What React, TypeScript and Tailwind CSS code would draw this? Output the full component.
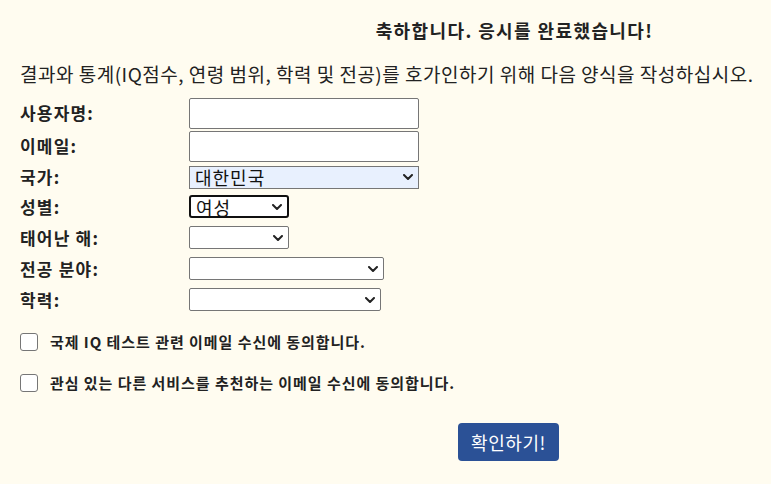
import { useState } from 'react';

const font = { fontFamily: '"Noto Sans CJK KR", "Noto Sans", sans-serif' };

function Chevron() {
  return (
    <svg viewBox="0 0 10 6" className="h-[6px] w-[10px] text-[#222]" fill="none" stroke="currentColor" strokeWidth="2" strokeLinecap="round" strokeLinejoin="round">
      <path d="M1 1l4 4 4-4" />
    </svg>
  );
}

function FakeSelect({ width, value, tone = 'plain' }: { width: string; value?: string; tone?: 'plain' | 'autofill' | 'focus' }) {
  const look =
    tone === 'autofill'
      ? 'bg-[#e8f0fe] border border-[#767676]'
      : tone === 'focus'
      ? 'bg-white border-2 border-[#101010] rounded-[3px]'
      : 'bg-white border border-[#767676] rounded-[2px]';
  return (
    <div className={`${width} h-[23px] flex items-center justify-between pl-[5px] pr-[5px] ${look}`}>
      <span className="text-[18px] leading-none tracking-[1px] text-[#111]">{value}</span>
      <Chevron />
    </div>
  );
}

export default function App() {
  const [a, setA] = useState(false);
  const [b, setB] = useState(false);

  const rows: { label: string; h: string; field: React.ReactNode }[] = [
    { label: '사용자명:', h: 'h-[32px]', field: <input className="w-[230px] h-[31px] bg-white border border-[#767676] rounded-[2px]" /> },
    { label: '이메일:', h: 'h-[34px]', field: <input className="w-[230px] h-[31px] bg-white border border-[#767676] rounded-[2px]" /> },
    { label: '국가:', h: 'h-[28px]', field: <FakeSelect width="w-[230px]" value="대한민국" tone="autofill" /> },
    { label: '성별:', h: 'h-[31px]', field: <FakeSelect width="w-[100px]" value="여성" tone="focus" /> },
    { label: '태어난 해:', h: 'h-[31px]', field: <FakeSelect width="w-[100px]" /> },
    { label: '전공 분야:', h: 'h-[31px]', field: <FakeSelect width="w-[195px]" /> },
    { label: '학력:', h: 'h-[31px]', field: <FakeSelect width="w-[192px]" /> },
  ];

  return (
    <div className="min-h-[484px] w-[771px] bg-[#fffcf0] text-[#222]" style={font}>
      <div className="pt-[18px] pl-[258px] text-center text-[18px] font-bold leading-[24px] tracking-[1.4px]">축하합니다. 응시를 완료했습니다!</div>
      <p className="mt-[20px] pl-[20px] text-[19px] leading-[24px] tracking-[0.5px] whitespace-nowrap">
        결과와 통계(IQ점수, 연령 범위, 학력 및 전공)를 호가인하기 위해 다음 양식을 작성하십시오.
      </p>
      <div className="mt-[11px] pl-[20px]">
        {rows.map(r => (
          <div key={r.label} className={`flex items-center ${r.h}`}>
            <div className="w-[169px] text-[17px] font-bold tracking-[1.2px]">{r.label}</div>
            {r.field}
          </div>
        ))}
      </div>
      <div className="mt-[17px] pl-[20px] flex flex-col gap-[21px]">
        <label className="flex items-center gap-[12px] text-[15px] font-bold tracking-[0.95px] leading-[20px]">
          <span
            onClick={() => setA(v => !v)}
            className={`w-[18px] h-[18px] rounded-[3px] border border-[#767676] ${a ? 'bg-[#2b5196]' : 'bg-white'}`}
          />
          국제 IQ 테스트 관련 이메일 수신에 동의합니다.
        </label>
        <label className="flex items-center gap-[12px] text-[15px] font-bold tracking-[0.95px] leading-[20px]">
          <span
            onClick={() => setB(v => !v)}
            className={`w-[18px] h-[18px] rounded-[3px] border border-[#767676] ${b ? 'bg-[#2b5196]' : 'bg-white'}`}
          />
          관심 있는 다른 서비스를 추천하는 이메일 수신에 동의합니다.
        </label>
      </div>
      <div className="mt-[30px] pl-[458px]">
        <button className="w-[101px] h-[38px] rounded-[4px] bg-[#2b5196] text-white text-[18px] leading-none tracking-[0.6px]">확인하기!</button>
      </div>
    </div>
  );
}
